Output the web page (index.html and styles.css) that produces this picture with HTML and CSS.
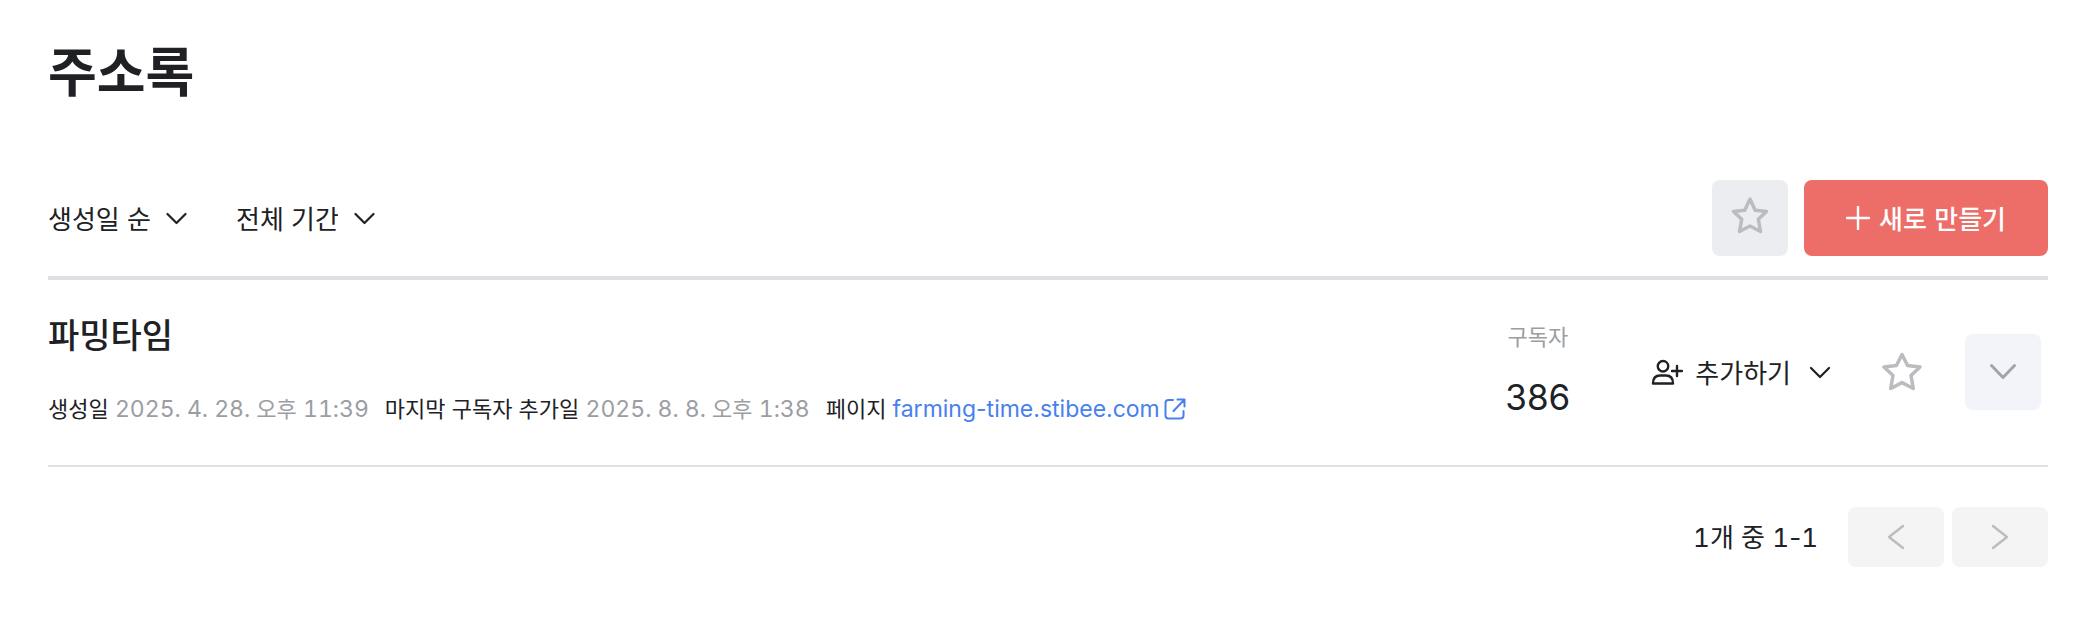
FILE: index.html
```html
<!DOCTYPE html>
<html lang="ko">
<head>
<meta charset="utf-8">
<meta name="viewport" content="width=device-width, initial-scale=1">
<title>주소록</title>
<link rel="stylesheet" href="styles.css">
</head>
<body>
<main class="page">
  <h1 class="page-title">주소록</h1>

  <div class="toolbar">
    <div class="filters">
      <div class="filter">
        <select class="filter-select" aria-label="정렬"><option>생성일 순</option></select>
        <svg class="chevron" viewBox="0 0 22 14" aria-hidden="true"><path d="M1.500 3l9 9 9-9"/></svg>
      </div>
      <div class="filter">
        <select class="filter-select" aria-label="기간"><option>전체 기간</option></select>
        <svg class="chevron" viewBox="0 0 22 14" aria-hidden="true"><path d="M1.500 3l9 9 9-9"/></svg>
      </div>
    </div>
    <div class="toolbar-actions">
      <button class="square-button favorite-filter" type="button" aria-label="즐겨찾기만 보기">
        <svg class="star" viewBox="0 0 40 40" aria-hidden="true"><path d="M20 4L25.200 15.200L36.500 16.500L28.300 24.300L30.500 36.500L20 31L9.500 36.500L11.700 24.300L3.500 16.500L14.800 15.200Z"/></svg>
      </button>
      <button class="create-button" type="button">
        <svg class="plus" viewBox="0 0 24 24" aria-hidden="true"><path d="M12 1v22M1 12h22"/></svg>
        새로 만들기
      </button>
    </div>
  </div>

  <section class="list">
    <article class="item">
      <div class="item-main">
        <h2 class="item-title">파밍타임</h2>
        <div class="meta">
          <div class="meta-entry">생성일 <span class="meta-value">2025. 4. 28. <span class="meridiem">오후</span> 11:39</span></div>
          <div class="meta-entry">마지막 구독자 추가일 <span class="meta-value">2025. 8. 8. <span class="meridiem">오후</span> 1:38</span></div>
          <div class="meta-entry">페이지 <a class="meta-link" href="#">farming-time.stibee.com<svg class="external" viewBox="0 0 22 22" aria-hidden="true"><path d="M9 2H4.500Q1.500 2 1.500 5V17.500Q1.500 20.500 4.500 20.500H16.500Q19.500 20.500 19.500 17.500V13M13.500 1.500H20.500V8.500M20.500 1.500L9.500 13"/></svg></a></div>
        </div>
      </div>
      <div class="subscribers">
        <span class="subscribers-label">구독자</span>
        <span class="subscribers-count">386</span>
      </div>
      <div class="item-actions">
        <button class="add-button" type="button">
          <svg class="person" viewBox="0 0 32 26" aria-hidden="true"><path d="M12 2a5 5 0 0 1 0 10.500a5 5 0 0 1 0-10.500zM2 24.500q0-8 7-8h6q7 0 7 8zM26 7v10M21 12h10"/></svg>
          추가하기
          <svg class="chevron add-chevron" viewBox="0 0 22 14" aria-hidden="true"><path d="M2 3l9 9 9-9"/></svg>
        </button>
        <button class="star-button" type="button" aria-label="즐겨찾기">
          <svg class="star" viewBox="0 0 40 40" aria-hidden="true"><path d="M20 2.500L25.600 13.500L38 15L29 23.500L31.300 36.500L20 30.600L8.700 36.500L11 23.500L2 15L14.400 13.500Z"/></svg>
        </button>
        <button class="square-button more-button" type="button" aria-label="더 보기">
          <svg class="chevron-large" viewBox="0 0 28 18" aria-hidden="true"><path d="M2.500 2.500L14 14.500L25.500 2.500"/></svg>
        </button>
      </div>
    </article>
  </section>

  <nav class="pager" aria-label="페이지 이동">
    <span class="pager-text"><span class="number">1</span>개 중 <span class="number">1</span><span class="dash">-</span><span class="number">1</span></span>
    <div class="pager-buttons">
      <button class="pager-button" type="button" aria-label="이전"><svg class="arrow" viewBox="0 0 18 26" aria-hidden="true"><path d="M16 2L2 13L16 24"/></svg></button>
      <button class="pager-button" type="button" aria-label="다음"><svg class="arrow" viewBox="0 0 18 26" aria-hidden="true"><path d="M2 2L16 13L2 24"/></svg></button>
    </div>
  </nav>
</main>
</body>
</html>
```
FILE: styles.css
```css
* { box-sizing: border-box; }

body {
  margin: 0;
  background: #fff;
  color: #202125;
  font-family: "Noto Sans CJK KR", sans-serif;
  font-size: 26px;
  line-height: 38px;
}

button, select {
  margin: 0;
  padding: 0;
  border: 0;
  background: none;
  color: inherit;
  font: inherit;
  cursor: pointer;
}

svg {
  display: block;
  flex: none;
  fill: none;
  stroke: currentColor;
  stroke-linecap: round;
  stroke-linejoin: round;
}

.page { padding: 30px 30px 48px 48px; }

.page-title {
  margin: 0;
  font-size: 53px;
  font-weight: 700;
  line-height: 78px;
}

.toolbar {
  display: flex;
  justify-content: space-between;
  align-items: center;
  margin-top: 72px;
  padding-bottom: 20px;
  border-bottom: 4px solid #dfe0e6;
}

.filters { display: flex; gap: 48px; }
.filter { display: flex; align-items: center; }
.filter-select { appearance: none; padding-right: 38px; }
.chevron { width: 22px; height: 14px; stroke-width: 2.2; pointer-events: none; }
.filter .chevron { margin-left: -22px; }

.toolbar-actions { display: flex; gap: 16px; }

.square-button {
  display: flex;
  align-items: center;
  justify-content: center;
  width: 76px;
  height: 76px;
  border-radius: 8px;
}

.favorite-filter { padding-bottom: 6px; background: #ecedf1; color: #bbbcc0; }
.star { width: 40px; height: 40px; stroke-width: 3.5; }

.create-button {
  display: flex;
  align-items: center;
  gap: 9px;
  padding: 0 42px;
  border-radius: 8px;
  background: #ed6e69;
  color: #fff;
  font-weight: 500;
}

.plus { width: 24px; height: 24px; stroke-width: 2.4; }

.item {
  display: flex;
  align-items: center;
  padding: 28px 7px 37px 0;
  border-bottom: 2px solid #dfe0e6;
}

.item-main { flex: 1; }

.item-title {
  margin: 0;
  font-size: 34px;
  font-weight: 500;
  line-height: 52px;
}

.meta {
  display: flex;
  flex-wrap: wrap;
  column-gap: 16px;
  margin-top: 28px;
  font-size: 22px;
}

.meta-value, .meta-link, .subscribers-count, .number, .dash {
  font-family: Inter, "Noto Sans CJK KR", sans-serif;
}

.meta-value, .number { font-variant-numeric: tabular-nums; }

.meta-value { color: #9b9da2; font-size: 23px; }
.meridiem { font-size: 22px; }

.meta-link {
  display: inline-flex;
  align-items: center;
  gap: 4px;
  color: #4880ee;
  font-size: 23px;
  text-decoration: none;
}

.external { width: 22px; height: 22px; stroke-width: 2; }

.subscribers {
  display: flex;
  flex-direction: column;
  align-items: center;
  gap: 24px;
  padding-bottom: 4px;
}

.subscribers-label { color: #9b9da2; font-size: 22px; }
.subscribers-count { font-size: 35px; }

.item-actions {
  display: flex;
  align-items: center;
  margin-left: 81px;
  padding-top: 8px;
}

.add-button {
  display: flex;
  align-items: center;
  gap: 12px;
}

.person { width: 32px; height: 26px; stroke-width: 2.4; }
.add-chevron { margin-left: 6px; }

.star-button { margin-left: 51px; color: #bbbcc0; }
.more-button { margin-left: 43px; background: #f3f4f9; color: #a2a4a9; }
.chevron-large { width: 28px; height: 18px; stroke-width: 3; }

.pager {
  display: flex;
  align-items: center;
  justify-content: flex-end;
  gap: 30px;
  margin-top: 40px;
}

.pager-buttons { display: flex; gap: 8px; }

.pager-button {
  display: flex;
  align-items: center;
  justify-content: center;
  width: 96px;
  height: 60px;
  border-radius: 8px;
  background: #f4f4f4;
  color: #bbbcc0;
}

.arrow { width: 18px; height: 26px; stroke-width: 2.4; }
```
